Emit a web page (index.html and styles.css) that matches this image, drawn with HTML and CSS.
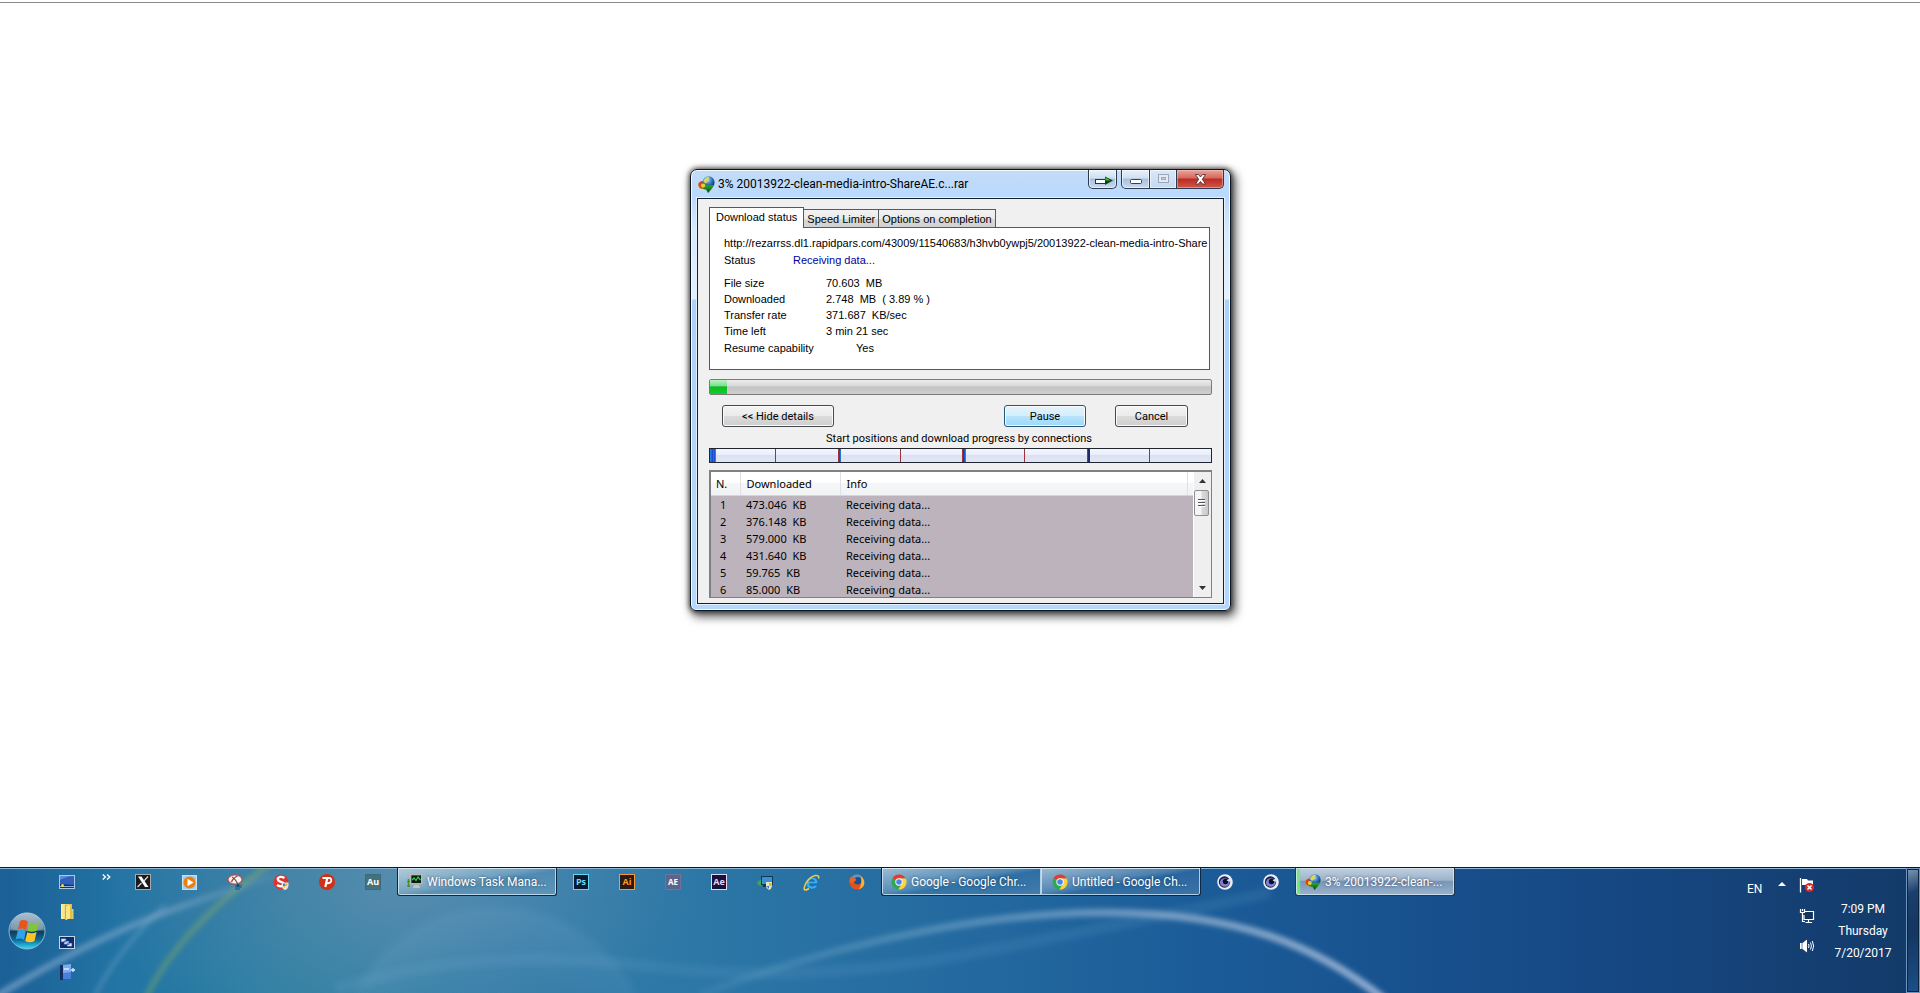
FILE: index.html
```html
<!DOCTYPE html>
<html lang="en">
<head>
<meta charset="utf-8">
<title>3% 20013922-clean-media-intro-ShareAE.c...rar</title>
<link rel="stylesheet" href="styles.css">
</head>
<body>
<svg class="defs" width="0" height="0" aria-hidden="true">
  <defs>
    <radialGradient id="globe" cx=".4" cy=".3" r=".7"><stop offset="0" stop-color="#d8ecff"/><stop offset=".4" stop-color="#4a90d8"/><stop offset="1" stop-color="#0c2c66"/></radialGradient>
    <linearGradient id="arrow" x1="0" y1="0" x2="0" y2="1"><stop offset="0" stop-color="#2fc02f"/><stop offset="1" stop-color="#064a06"/></linearGradient>
    <linearGradient id="orb" x1="0" y1="0" x2="0" y2="1"><stop offset="0" stop-color="#8fa9ba"/><stop offset=".48" stop-color="#4b7390"/><stop offset=".5" stop-color="#0d3a5c"/><stop offset=".75" stop-color="#0f6b96"/><stop offset="1" stop-color="#2be0ff"/></linearGradient>
    <linearGradient id="folder"><stop offset="0" stop-color="#fdf0a0"/><stop offset="1" stop-color="#e2b93c"/></linearGradient>
    <symbol id="idm" viewBox="0 0 16 16">
      <ellipse cx="4.800" cy="8.500" rx="4.700" ry="3.800" fill="#d99a18"/><path d="M.800 6.500Q4 3 7 6L3 12Q-.500 9 .800 6.500" fill="#d8451c"/>
      <circle cx="10" cy="5.800" r="5.600" fill="url(#globe)"/><path d="M5 5Q6.500 1 10.500 .800L10 4L7 7Z" fill="#dcd850"/>
      <path d="M3 9.500Q3 7 6 7.500Q7 9.500 10 9L15.500 8.500L13 12L9.500 16L7.500 12.800Q4 13 3 9.500" fill="url(#arrow)"/><circle cx="4.800" cy="9" r="2" fill="#eec93a"/>
    </symbol>
    <symbol id="chrome" viewBox="0 0 16 16">
      <path d="M8 8L1.500 4.300A7.500 7.500 0 0 1 14.600 4.500L8 4.500Z" fill="#e33b2e"/>
      <path d="M1.500 4.300A7.500 7.500 0 0 0 7.300 15.500L11 9.800L8 8Z" fill="#2da94f"/>
      <path d="M14.600 4.500A7.500 7.500 0 0 1 7.300 15.500L11 9.800L8 4.500Z" fill="#fdd23a"/>
      <circle cx="8" cy="8" r="3.700" fill="#fff"/><circle cx="8" cy="8" r="2.800" fill="#4a83ee"/>
    </symbol>
    <symbol id="c4d" viewBox="0 0 16 16">
      <circle cx="8" cy="8" r="7.800" fill="#eceef5"/><circle cx="7.500" cy="8" r="5.700" fill="#1c1c48"/><ellipse cx="7.800" cy="8.500" rx="4.900" ry="4.300" fill="#7c84cc"/><circle cx="8.500" cy="7.500" r="2.700" fill="#0c0d28"/><path d="M9.500 6.500L14 3.500L13.500 8Z" fill="#dfe1f2"/>
    </symbol>
  </defs>
</svg>

<main class="desktop">
  <section class="window" aria-label="Download status window">
    <header class="titlebar">
      <svg class="title-icon" viewBox="0 0 16 16"><use href="#idm"/></svg>
      <h1 class="title">3% 20013922-clean-media-intro-ShareAE.c...rar</h1>
      <div class="caption">
        <button class="cap cap-tray" aria-label="Minimize to tray"><svg width="18" height="10" viewBox="0 0 18 10"><rect x=".500" y="3.500" width="10" height="4" fill="#fff" stroke="#30303c"/><path d="M10 .500L18 4.500L10 9Z" fill="#1a3b1a"/><path d="M10.500 1.200L15.500 4.500H10.500Z" fill="#17d81e"/></svg></button>
        <button class="cap cap-min" aria-label="Minimize"><svg width="13" height="6" viewBox="0 0 13 6"><rect x=".500" y="1.500" width="11" height="4" rx="1" fill="#fff" stroke="#3c3f50"/></svg></button>
        <button class="cap cap-max" aria-label="Maximize" disabled><svg width="13" height="10" viewBox="0 0 13 10"><rect x="1.500" y=".500" width="10" height="8" fill="#e4eaf2" stroke="#9aa8ba"/><rect x="4.500" y="3.500" width="4" height="2" fill="#c5d3e4" stroke="#9aa8ba"/></svg></button>
        <button class="cap cap-close" aria-label="Close"><svg width="13" height="11" viewBox="0 0 13 11"><path d="M1.500 .500H4.500L6.500 3L8.500 .500H11.500L8.300 5.300L11.500 10H8.500L6.500 7.500L4.500 10H1.500L4.700 5.300Z" fill="#fff" stroke="#50363c" stroke-width=".900"/></svg></button>
      </div>
    </header>
    <div class="client">
      <div class="tabs" role="tablist">
        <button class="tab tab-on" role="tab" aria-selected="true">Download status</button>
        <button class="tab" role="tab">Speed Limiter</button>
        <button class="tab" role="tab">Options on completion</button>
      </div>
      <div class="panel" role="tabpanel">
        <p class="url">http://rezarrss.dl1.rapidpars.com/43009/11540683/h3hvb0ywpj5/20013922-clean-media-intro-Share</p>
        <dl class="status"><dt>Status</dt><dd>Receiving data...</dd></dl>
        <dl class="facts">
          <dt>File size</dt><dd>70.603  MB</dd>
          <dt>Downloaded</dt><dd>2.748  MB  ( 3.89 % )</dd>
          <dt>Transfer rate</dt><dd>371.687  KB/sec</dd>
          <dt>Time left</dt><dd>3 min 21 sec</dd>
        </dl>
        <dl class="resume"><dt>Resume capability</dt><dd>Yes</dd></dl>
      </div>
      <div class="progress" role="progressbar" aria-label="Download progress" aria-valuenow="3"><div class="progress-fill"></div></div>
      <div class="actions">
        <button class="btn btn-hide">&lt;&lt; Hide details</button>
        <button class="btn btn-pause">Pause</button>
        <button class="btn btn-cancel">Cancel</button>
      </div>
      <p class="caption-line">Start positions and download progress by connections</p>
      <div class="segments">
        <span class="seg seg-first"></span><span class="seg"></span><span class="seg seg-blue"></span><span class="seg"></span><span class="seg seg-blue seg-wide"></span><span class="seg"></span><span class="seg seg-blue seg-dim"></span><span class="seg"></span>
      </div>
      <div class="list">
        <table class="table">
          <colgroup><col class="col-n"><col class="col-d"><col><col class="col-end"></colgroup>
          <thead><tr><th>N.</th><th>Downloaded</th><th>Info</th><th></th></tr></thead>
          <tbody>
            <tr><td>1</td><td>473.046  KB</td><td colspan="2">Receiving data...</td></tr>
            <tr><td>2</td><td>376.148  KB</td><td colspan="2">Receiving data...</td></tr>
            <tr><td>3</td><td>579.000  KB</td><td colspan="2">Receiving data...</td></tr>
            <tr><td>4</td><td>431.640  KB</td><td colspan="2">Receiving data...</td></tr>
            <tr><td>5</td><td>59.765  KB</td><td colspan="2">Receiving data...</td></tr>
            <tr><td>6</td><td>85.000  KB</td><td colspan="2">Receiving data...</td></tr>
          </tbody>
        </table>
        <div class="scroll">
          <button class="scroll-arrow" aria-label="Scroll up"><svg width="7" height="4" viewBox="0 0 7 4"><path d="M3.500 0L7 4H0Z" fill="#333"/></svg></button>
          <div class="thumb"><i></i><i></i><i></i></div>
          <button class="scroll-arrow scroll-down" aria-label="Scroll down"><svg width="7" height="4" viewBox="0 0 7 4"><path d="M0 0H7L3.500 4Z" fill="#333"/></svg></button>
        </div>
      </div>
    </div>
  </section>
</main>

<footer class="taskbar">
  <svg class="aurora" viewBox="0 0 1920 126" preserveAspectRatio="none" aria-hidden="true">
    <defs>
      <filter id="blur" x="-20%" y="-50%" width="140%" height="200%"><feGaussianBlur stdDeviation="2.500"/></filter>
      <linearGradient id="s1"><stop offset="0" stop-color="#a5bfe0" stop-opacity=".5"/><stop offset=".6" stop-color="#8fb0d0" stop-opacity=".45"/><stop offset="1" stop-color="#9ab8cc" stop-opacity=".05"/></linearGradient>
      <linearGradient id="s2" gradientUnits="userSpaceOnUse" x1="690" x2="1390" y1="0" y2="0"><stop offset="0" stop-color="#7fb0cf" stop-opacity=".1"/><stop offset=".3" stop-color="#7fb0cf" stop-opacity=".4"/><stop offset=".7" stop-color="#9bb6d4" stop-opacity=".7"/><stop offset="1" stop-color="#b4c8e4" stop-opacity=".75"/></linearGradient>
      <radialGradient id="dome" gradientUnits="userSpaceOnUse" cx="495" cy="195" r="162"><stop offset="0" stop-color="#cfe6ff" stop-opacity="0"/><stop offset=".6" stop-color="#cfe6ff" stop-opacity=".01"/><stop offset=".93" stop-color="#cfe6ff" stop-opacity=".06"/><stop offset="1" stop-color="#cfe6ff" stop-opacity="0"/></radialGradient>
    </defs>
    <circle cx="495" cy="195" r="162" fill="url(#dome)"/>
    <g fill="none" filter="url(#blur)">
      <path d="M-5 130Q90 72 170 43T280 8" stroke="url(#s1)" stroke-width="7"/>
      <path d="M95 128Q120 80 165 38" stroke="#8fbad8" stroke-opacity=".25" stroke-width="5"/>
      <path d="M146 130Q180 60 270 -4" stroke="#9ab850" stroke-opacity=".34" stroke-width="6"/>
      <path d="M335 122Q480 78 640 98T960 88T1270 25" stroke="#7fb4d4" stroke-opacity=".12" stroke-width="12"/>
      <path d="M700 128C860 66 1010 44 1110 45C1240 46 1315 78 1384 132" stroke="url(#s2)" stroke-width="8"/>
    </g>
  </svg>

  <button class="start" aria-label="Start">
    <svg width="38" height="38" viewBox="0 0 38 38">
      <circle cx="19" cy="19" r="18" fill="url(#orb)" stroke="#8db9d2"/><path d="M2.500 17A16.500 16.500 0 0 1 35.500 17Q19 22 2.500 17" fill="#fff" opacity=".25"/>
      <path d="M12 9Q15.500 7 20 9.500L18 18Q14 15.500 10 17.500Z" fill="#e9541d"/><path d="M21.500 10.300Q26 12.500 31 10L29 18.500Q24 21 19.500 18.800Z" fill="#82c43c"/>
      <path d="M9.700 19Q13.500 17 17.700 19.500L16 28Q12 25.500 7.700 27.500Z" fill="#2fa4e8"/><path d="M19.200 20.300Q24 22.500 28.600 20L26.500 29Q22 31.500 17.200 29Z" fill="#fbc425"/>
    </svg>
  </button>

  <nav class="quick" aria-label="Quick launch">
    <button class="ico" aria-label="Show desktop"><svg width="16" height="14" viewBox="0 0 16 14"><rect x=".500" y=".500" width="15" height="13" fill="#17326c" stroke="#aac8e6"/><path d="M1 1H15V10L1 9Z" fill="#3060bc"/><path d="M1 5Q8 1 15 1V1H1Z" fill="#5c8cd8"/><path d="M1 11.500H15" stroke="#8faed0"/><circle cx="3.500" cy="10.500" r="1.500" fill="#eedc50"/></svg></button>
    <button class="ico" aria-label="Explorer"><svg width="14" height="16" viewBox="0 0 14 16"><rect x="1" y="0" width="11" height="15" fill="url(#folder)"/><path d="M5 1H7V16H5Z" fill="#d4aa38"/><path d="M6 2L10 1V14L6 16Z" fill="#f9e488"/><path d="M12 5H13.500V15H12Z" fill="#d9cf70"/></svg></button>
    <button class="ico" aria-label="Switch windows"><svg width="16" height="13" viewBox="0 0 16 13"><rect x=".500" y=".500" width="15" height="12" fill="#0c2c6c" stroke="#c2d4ea"/><path d="M2 2.500H7V6H2ZM5 5H10V8.500H5ZM8 7H13V10.500H8Z" fill="#d8e8fa" stroke="#274c92" stroke-width=".700"/></svg></button>
    <button class="ico" aria-label="Notebook"><svg width="16" height="16" viewBox="0 0 16 16"><path d="M1 1H4V16H1Z" fill="#142c60"/><path d="M4 1L12 0V15H4Z" fill="#7fabee"/><path d="M4 9L12 8V15H4Z" fill="#4a80dc"/><path d="M5 5H10" stroke="#dcebff" stroke-width="1.500"/><path d="M12 6H16M14 4V8" stroke="#dcecff" stroke-width="1.300"/></svg></button>
  </nav>
  <button class="more" aria-label="More"><svg width="9" height="6" viewBox="0 0 9 6"><path d="M.700 .500L3.500 3L.700 5.500M5 .500L7.800 3L5 5.500" fill="none" stroke="#fff" stroke-width="1.300"/></svg></button>

  <nav class="tasks" aria-label="Running programs">
    <button class="pin" aria-label="X"><svg width="16" height="16" viewBox="0 0 16 16"><rect x=".500" y=".500" width="15" height="15" fill="#1b1a1c" stroke="#aaa"/><path d="M3 2.500H6.500L13.500 13H10Z" fill="#fff"/><path d="M13 2.500L8.500 7.500M6.500 9L2.500 13" stroke="#ddd" stroke-width="1.200"/></svg></button>
    <button class="pin" aria-label="Media Player"><svg width="15" height="15" viewBox="0 0 15 15"><rect x=".500" y=".500" width="14" height="14" fill="#9fd0f2" stroke="#bfe2f8"/><circle cx="7.500" cy="7.500" r="6" fill="#f07c0c"/><path d="M5.500 3.800L11.500 7.500L5.500 11.200Z" fill="#fff"/></svg></button>
    <button class="pin" aria-label="Snipping Tool"><svg width="16" height="16" viewBox="0 0 16 16"><ellipse cx="8" cy="5.500" rx="7" ry="4.600" fill="#f6f2f2" stroke="#c0504a" stroke-width="1.200"/><path d="M5 3Q9 5 12 13M10.500 2Q6 4 4.500 8" fill="none" stroke="#8a4644" stroke-width="1.300"/><path d="M8 10.500H15V14H13V16H8Z" fill="#2a74ac"/><circle cx="11" cy="11.500" r="1.500" fill="#16486e"/></svg></button>
    <button class="pin" aria-label="S"><svg width="16" height="16" viewBox="0 0 16 16"><circle cx="8" cy="8" r="7.500" fill="#d93530"/><path d="M11.500 4Q7 1.500 4.800 4.500Q4.500 7 8 7.800Q11.500 8.800 10.500 11Q7.500 13.500 4 11" fill="none" stroke="#fff" stroke-width="2.300"/><path d="M9 8.500H15.500V12Q15 15 12 16Q9 15 9 12Z" fill="#e7e7e7"/><path d="M12 9.500H14.500V12H12Z" fill="#e8bd30"/><path d="M9.800 12H12V14.500Z" fill="#ecc033"/><path d="M10 9.500H12V12H10Z" fill="#3a8bd0"/></svg></button>
    <button class="pin" aria-label="P"><svg width="16" height="16" viewBox="0 0 16 16"><circle cx="8" cy="8" r="8" fill="#cf3016"/><path d="M3.500 4H10Q12.700 4 12.200 7Q11.500 9.300 8.500 9.300H7" fill="none" stroke="#fff" stroke-width="1.900"/><path d="M8.300 4L6.300 13" stroke="#fff" stroke-width="2.200"/></svg></button>
    <button class="pin"><span class="app app-au">Au</span></button>
    <button class="task"><svg width="16" height="15" viewBox="0 0 16 15"><path d="M1.500 5V13" stroke="#2c9b2c" stroke-width="1.500"/><rect x="3.700" y=".700" width="11" height="9" fill="#101a10" stroke="#b8bcbc" stroke-width="1.300"/><path d="M5 6L7 4L9 6.500L11 3L13.500 6" fill="none" stroke="#2cd84a" stroke-width="1.200"/><path d="M7 11H12L13 14H6Z" fill="#c9c5b4"/><path d="M0 7.500H3M0 12H3" stroke="#d33" stroke-width="1"/></svg><span>Windows Task Mana...</span></button>
    <button class="pin"><span class="app app-ps">Ps</span></button>
    <button class="pin"><span class="app app-ai">Ai</span></button>
    <button class="pin"><span class="app app-ae1">AE</span></button>
    <button class="pin"><span class="app app-ae2">Ae</span></button>
    <button class="pin" aria-label="Remote computer"><svg width="16" height="15" viewBox="0 0 16 15"><rect x="4.500" y="1.500" width="11" height="8" fill="#3493d6" stroke="#16364c"/><path d="M0 7L4 4.500V11L1 10Z" fill="#3fa45b"/><path d="M6 10H9V12H6Z" fill="#16364c"/><path d="M9 7H15V11Q14.500 14 12 15Q9 13.500 9 11Z" fill="#e8e4c0"/><path d="M12 8H14.500V11H12Z" fill="#e0b52e"/><path d="M9.500 11H12V14Z" fill="#2f78c8"/></svg></button>
    <button class="pin" aria-label="Internet Explorer"><svg width="17" height="17" viewBox="0 0 17 17"><path d="M15 9.800H6.300Q6.800 12.300 9 12.300Q10.500 12.300 11.200 11.300H14.700Q13 15.200 9 15.200Q3.200 14.700 3.200 9Q3.700 3 9 2.900Q15 3.200 15 9.800ZM6.400 7.300H11.500Q11 5.500 9 5.500Q7 5.500 6.400 7.300Z" fill="#35b0f2" stroke="#0f5fa8" stroke-width=".600"/><path d="M15.500 4.500Q16.500 1 12.500 1.500Q7 2.500 3 9Q0 15 2 16Q4 16 6 14.500" fill="none" stroke="#f2c94a" stroke-width="1.600"/></svg></button>
    <button class="pin" aria-label="Firefox"><svg width="16" height="16" viewBox="0 0 16 16"><circle cx="7.800" cy="8" r="7.500" fill="#e8501a"/><path d="M3 2.500Q7-.800 12 1.500L11.500 6L6 6Z" fill="#4f9ad8"/><circle cx="8.800" cy="6.800" r="3.800" fill="#1c4f94"/><path d="M1 3L4.500 4Q6.500 4 7.500 6L5.500 7.500L4 9L.500 8Z" fill="#ec6420"/><path d="M11.500 2Q15.800 5 15.300 9.500Q14.500 14 9.500 15.400Q14 10 11.500 2" fill="#fbb52c"/></svg></button>
    <div class="group">
      <button class="task"><svg width="16" height="16" viewBox="0 0 16 16"><use href="#chrome"/></svg><span>Google - Google Chr...</span></button>
      <button class="task"><svg width="16" height="16" viewBox="0 0 16 16"><use href="#chrome"/></svg><span>Untitled - Google Ch...</span></button>
    </div>
    <button class="pin" aria-label="Cinema 4D"><svg width="16" height="16" viewBox="0 0 16 16"><use href="#c4d"/></svg></button>
    <button class="pin" aria-label="Cinema 4D"><svg width="16" height="16" viewBox="0 0 16 16"><use href="#c4d"/></svg></button>
    <button class="task task-on"><svg width="16" height="16" viewBox="0 0 16 16"><use href="#idm"/></svg><span>3% 20013922-clean-...</span></button>
  </nav>

  <span class="lang">EN</span>
  <button class="tray-up" aria-label="Show hidden icons"><svg width="8" height="4" viewBox="0 0 8 4"><path d="M4 0L8 4H0Z" fill="#fff"/></svg></button>
  <div class="tray">
    <svg width="16" height="16" viewBox="0 0 16 16"><path d="M1.500 1V15.500" stroke="#fff" stroke-width="1.300"/><path d="M3 2H8L9 3.500H14V10H8L7 8H3Z" fill="#fff"/><circle cx="10.500" cy="10.500" r="4.500" fill="#d82828"/><path d="M8.500 8.500L12.500 12.500M12.500 8.500L8.500 12.500" stroke="#fff" stroke-width="1.500"/></svg>
    <svg width="16" height="16" viewBox="0 0 16 16"><path d="M6 3.500H14.500V11.500H5V7" fill="#12335c" stroke="#fff" stroke-width="1.200"/><path d="M1.500 1V4.500H5.500V1M3.500 1V3M3.500 5V13.500H6M9.500 12V14M6.500 14.500H13" fill="none" stroke="#fff" stroke-width="1.200"/></svg>
    <svg width="16" height="14" viewBox="0 0 16 14"><path d="M1 4H3.500L8 .500V13.500L3.500 10H1Z" fill="#fff"/><path d="M3 4V10" stroke="#28507c" stroke-width=".700"/><path d="M9.500 5Q10.500 7 9.500 9M11.500 3.500Q13.300 7 11.500 10.500M13.300 2Q16 7 13.300 12" fill="none" stroke="#fff" stroke-width="1"/></svg>
  </div>
  <time class="clock" datetime="2017-07-20T19:09"><span>7:09 PM</span><span>Thursday</span><span>7/20/2017</span></time>
  <button class="peek" aria-label="Show desktop"></button>
</footer>
</body>
</html>
```
FILE: styles.css
```css
*, *::before, *::after { box-sizing: border-box; }
body {
  margin: 0;
  min-height: 100vh;
  display: flex;
  flex-direction: column;
  background: #fff;
  font: 12px/16px Roboto, "Noto Sans", sans-serif;
  color: #000;
}
button { font: inherit; color: inherit; padding: 0; margin: 0; border: 0; background: none; }
p, dl, dd, h1 { margin: 0; }
svg { display: block; flex: none; }
.defs { position: absolute; }

.desktop {
  flex: 1;
  display: flex;
  justify-content: center;
  align-items: flex-start;
  padding: 166px 0 0 1px;
  margin-top: 2px;
  border-top: 1px solid #8a8a8a;
}

/* Download window */
.window {
  width: 541px;
  padding: 0 6px 6px;
  border: 1px solid #0c1420;
  border-radius: 7px 7px 6px 6px;
  background: linear-gradient(#c3dcf8 0, #b9d9fd 28px, #d6e9fc 60px, #e4f0fc 129px, #acd0fa 130px, #b5d7fc 100%);
  box-shadow: inset 0 0 0 1px #f4faff, 0 0 5px 1px rgba(0,0,0,.6), 3px 4px 10px 2px rgba(0,0,0,.6);
}
.titlebar { display: flex; height: 28px; padding-left: 1px; }
.title-icon { width: 17px; height: 17px; margin: 6px 3px 0 0; }
.title { flex: 1; font-size: 12px; line-height: 16px; font-weight: 400; padding-top: 6px; white-space: nowrap; }
.caption { display: flex; }
.cap {
  height: 19px;
  display: grid;
  place-items: center;
  border: 1px solid #2c3a4e;
  border-top: 0;
  background: linear-gradient(#e8f1fb 0, #cfdff1 45%, #aabfdb 50%, #c6daf2 100%);
  box-shadow: inset 0 0 0 1px rgba(255,255,255,.6);
}
.cap-tray { width: 29px; border-radius: 0 0 5px 5px; margin-right: 4px; padding: 3px 0 0 3px; }
.cap-min { width: 29px; border-radius: 0 0 0 5px; padding: 3px 0 0 2px; }
.cap-max { width: 26px; border-left: 0; border-right: 0; background: linear-gradient(#d9e8f8, #c4d9f1); }
.cap-close {
  width: 48px;
  border-radius: 0 0 5px 0;
  background: linear-gradient(#e8a79c 0, #d6665a 45%, #bb2b22 50%, #d1564a 100%);
  box-shadow: inset 0 0 0 1px rgba(255,200,190,.5);
}
.client {
  border: 1px solid #16202c;
  box-shadow: 0 0 0 1px #e4f1ff;
  background: #f0f0f0;
  padding: 8px 11px 5px;
  font: 11px/16px "Liberation Sans", Arial, sans-serif;
}
.tabs { display: flex; align-items: flex-end; }
.tab {
  height: 18px;
  padding: 1px 3px 0;
  border: 1px solid #55585c;
  border-left-width: 0;
  border-bottom: 0;
  background: linear-gradient(#f2f2f2 0, #ebebeb 50%, #d8d8d8 55%, #d2d2d2 100%);
  white-space: nowrap;
}
.tab-on { height: 21px; margin-bottom: -1px; z-index: 1; padding: 0 6px 2px; background: #fff; border-left-width: 1px; }
.panel {
  margin-right: 2px;
  border: 1px solid #55585c;
  background: #fff;
  padding: 7px 4px 12px 14px;
}
.url { line-height: 17px; white-space: nowrap; }
dl { display: grid; grid-template-columns: 102px 1fr; }
dt, dd { white-space: pre; }
.status { grid-template-columns: 69px 1fr; line-height: 17px; margin-bottom: 6px; }
.status dd { color: #00009c; }
.resume { grid-template-columns: 132px 1fr; line-height: 18px; }

.progress {
  display: flex;
  height: 16px;
  margin-top: 9px;
  border: 1px solid #7b7b7b;
  border-radius: 2px;
  background: linear-gradient(#ececec 0, #dadada 40%, #c4c4c4 50%, #cfcfcf 100%);
}
.progress-fill { width: 17px; background: linear-gradient(#bdf0c4 0, #7fe08e 40%, #0cba26 50%, #12cf2a 100%); }
.actions { display: flex; margin: 10px 24px 0 13px; font-family: Roboto, sans-serif; }
.btn {
  height: 22px;
  padding-top: 1px;
  border: 1px solid #45484c;
  border-radius: 3px;
  background: linear-gradient(#f3f3f3 0, #ebebeb 48%, #dcdcdc 50%, #cecece 100%);
  box-shadow: inset 0 0 0 1px #fbfbfb;
}
.btn-hide { width: 112px; margin-right: auto; }
.btn-pause { width: 82px; margin-right: 29px; border-color: #24577c; background: linear-gradient(#e4f4fc 0, #d3effd 48%, #b8e4fb 50%, #9cd8f8 100%); }
.btn-cancel { width: 73px; }
.caption-line { font-family: Roboto, sans-serif; text-align: center; padding: 4px 3px 1px 0; }
.segments { display: flex; height: 15px; border: 1px solid #20242e; background: linear-gradient(#f4f6fe 0, #eaeefa 45%, #dbe1f2 50%, #e2e7f4 100%); }
.seg { flex: 1; border-left: 1px solid #a03038; }
.seg-first { flex: 1 0 4px; border: 0; background: linear-gradient(90deg, #2a8cf0 0, #2038c0 3px, #e02850 3px, #e02850 4px, #183cc8 4px, #2d9af2 6px, transparent 6px); }
.seg-blue { background: linear-gradient(90deg, #0c52c4 1px, #2d9cf4 2px, transparent 2px); }
.seg-wide { background: linear-gradient(90deg, #0c42b4 1px, #2d9cf4 3px, transparent 3px); }
.seg-dim { background: linear-gradient(90deg, #1c2c70 2px, transparent 2px); }

.list { display: flex; height: 128px; overflow: hidden; margin-top: 7px; border: 2px solid #7e8086; border-width: 2px 1px 1px 2px; background: #f0f0f0; }
.table { flex: 1; border-collapse: collapse; table-layout: fixed; width: 100%; font: 11px/17px "Noto Sans", sans-serif; background: #bdb3bd; }
.col-n { width: 29px; }
.col-d { width: 100px; }
.col-end { width: 6px; }
.table th { height: 23px; padding: 0 6px; text-align: left; font-weight: 400; background: linear-gradient(#fff 45%, #f5f6f8 50%, #f1f2f4 100%); border-right: 1px solid #dfe1e6; border-bottom: 1px solid #d5d5d5; }
.table th:first-child { padding-left: 5px; }
.table th:last-child { border-right: 0; padding: 0; }
.table td { height: 17px; padding: 0 6px; white-space: pre; }
.table td:first-child { padding: 0 6px 0 9px; }
.scroll { width: 18px; display: flex; flex-direction: column; border-left: 1px solid #fff; background: #efefef; }
.scroll-arrow { height: 18px; display: grid; place-items: center; }
.scroll-down { margin-top: auto; }
.thumb { height: 26px; width: 15px; border: 1px solid #8c8f94; border-radius: 2px; background: linear-gradient(90deg, #f5f5f5 45%, #dadada 55%, #c8c8cc); display: flex; flex-direction: column; justify-content: center; align-items: center; gap: 1px; }
.thumb i { width: 7px; height: 2px; background: #50545c; border-bottom: 1px solid #fff; }

/* Taskbar */
.taskbar {
  position: relative;
  display: flex;
  height: 126px;
  border-top: 1px solid #0a1a30;
  box-shadow: inset 0 1px 0 #8fb8d8;
  color: #fff;
  overflow: hidden;
  background:
    radial-gradient(ellipse 300px 200px at 400px 10px, rgba(130,160,185,.5), transparent),
    radial-gradient(ellipse 240px 110px at 280px 126px, rgba(40,150,170,.18), transparent),
    linear-gradient(90deg, #1b6096 0, #2273a4 120px, #27789f 300px, #2d7aa8 500px, #2c77a6 700px, #246aa0 960px, #1b5c98 1200px, #174f8c 1450px, #164680 1650px, #133a68 1920px);
}
.aurora { position: absolute; inset: 0; width: 100%; height: 100%; }
.taskbar > :not(.aurora) { position: relative; }
.start { align-self: center; margin-left: 8px; width: 38px; }
.quick { display: grid; grid-template-rows: repeat(4, 30px); width: 42px; justify-items: center; }
.ico { display: grid; place-items: center; width: 20px; height: 28px; }
.more { align-self: flex-start; margin: 6px 0 0 14px; width: 18px; }
.tasks { flex: 1; display: flex; align-items: flex-start; min-width: 0; }
.pin { width: 46px; height: 28px; display: grid; place-items: center; flex: none; }
.task {
  flex: none;
  width: 160px;
  height: 28px;
  margin: 0 1px;
  display: flex;
  align-items: center;
  gap: 4px;
  padding-left: 9px;
  border: 1px solid #10283e;
  border-top: 0;
  border-radius: 0 0 3px 3px;
  box-shadow: inset 0 0 0 1px rgba(220,238,250,.75);
  background: linear-gradient(170deg, rgba(255,255,255,.55) 0, rgba(255,255,255,.22) 45%, rgba(255,255,255,.06) 55%, rgba(255,255,255,.15) 100%);
  white-space: nowrap;
  text-shadow: 0 0 3px rgba(0,20,50,.6);
}
.group { display: flex; margin: 0 1px; }
.group .task { margin: 0; }
.group .task:first-child { border-radius: 0 0 0 3px; border-right: 0; }
.group .task:last-child { border-radius: 0 0 3px 0; border-left: 0; padding-left: 11px; }
.task-on { border-color: #203850; background: linear-gradient(90deg, #7ee08c 3px, transparent 5px), linear-gradient(#c0cfde 0, #9eb4cc 45%, #7896b8 50%, #9ab2cc 100%); }
.app { display: grid; place-items: center; width: 16px; height: 16px; border: 1px solid; font: 700 9px/14px "Open Sans", sans-serif; }
.app-au { background: #45707e; border-color: #3c6a7a; color: #fff; }
.app-ps { background: #0b1a30; border-color: #62d8f4; color: #6fdcf6; }
.app-ai { background: #2a1a10; border-color: #f39a3c; color: #f8992e; }
.app-ae1 { background: #5c648c; border-color: #6c7498; color: #fff; font-size: 8px; }
.app-ae2 { background: #1a1038; border-color: #e4d8f4; color: #e4d4fa; }
.lang { margin-top: 13px; width: 31px; }
.tray-up { align-self: flex-start; margin-top: 14px; width: 8px; }
.tray { display: flex; flex-direction: column; gap: 15px; margin: 9px 0 0 13px; }
.clock { display: flex; flex-direction: column; align-items: center; width: 91px; padding-left: 5px; margin-top: 30px; line-height: 22px; }
.peek { width: 14px; height: 125px; border: 1px solid #6f97bd; outline: 1px solid #0c2340; outline-offset: -2px; background: linear-gradient(160deg, #7d97b2 0, #1a3f6c 20%, #143660 50%, #1c4f88 100%); }
```
